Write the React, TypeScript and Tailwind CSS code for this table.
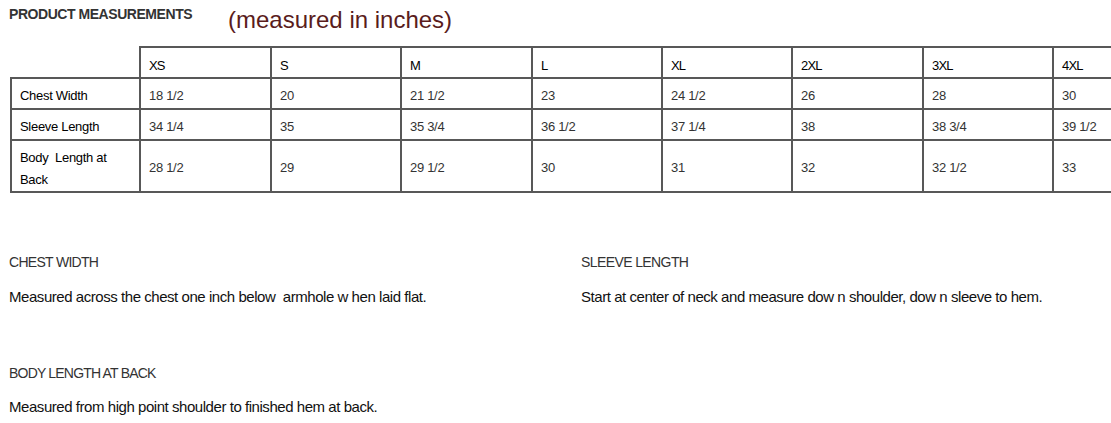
import React from "react";

const sizes = ["XS", "S", "M", "L", "XL", "2XL", "3XL", "4XL"];
const rows: { label: React.ReactNode; values: string[]; tall?: boolean }[] = [
  { label: "Chest Width", values: ["18 1/2", "20", "21 1/2", "23", "24 1/2", "26", "28", "30"] },
  { label: "Sleeve Length", values: ["34 1/4", "35", "35 3/4", "36 1/2", "37 1/4", "38", "38 3/4", "39 1/2"] },
  {
    label: (
      <>
        Body&nbsp; Length at
        <br />
        Back
      </>
    ),
    values: ["28 1/2", "29", "29 1/2", "30", "31", "32", "32 1/2", "33"],
    tall: true,
  },
];
const widths = [129, 131, 130, 131, 130, 130, 131, 130, 130];

export default function App() {
  return (
    <div
      className="w-[1111px] h-[423px] overflow-hidden bg-white text-[#222]"
      style={{ fontFamily: '"Liberation Sans", Arial, sans-serif' }}
    >
      <div className="flex items-start h-[46px]">
        <div className="ml-[9px] mt-[6px] w-[219px] text-[14px] font-bold text-[#333] tracking-[-0.45px] leading-[16px]">
          PRODUCT MEASUREMENTS
        </div>
        <div className="mt-[5px] text-[24px] leading-[30px] text-[#5a1c1c]">(measured in inches)</div>
      </div>

      <table className="ml-[10px] border-collapse table-fixed text-[13px] leading-[22px] tracking-[-0.3px]" style={{ width: 1172 }}>
        <colgroup>
          {widths.map((w, i) => (
            <col key={i} style={{ width: w }} />
          ))}
        </colgroup>
        <tbody>
          <tr className="h-[31px]">
            <td className="border-0 p-0"></td>
            {sizes.map((s) => (
              <td key={s} className="border-2 border-[#585858] pl-[8px] pt-[6px] align-middle tracking-[-0.8px] text-black">
                {s}
              </td>
            ))}
          </tr>
          {rows.map((r, ri) => (
            <tr key={ri} className={r.tall ? "h-[52px]" : "h-[31px]"}>
              <td className={`border-2 border-[#585858] pl-[8px] align-middle text-black ${r.tall ? "pt-[6px]" : "pt-[4px]"}`}>{r.label}</td>
              {r.values.map((v, i) => (
                <td key={i} className="border-2 border-[#585858] pl-[8px] pt-[4px] align-middle text-[#333]">
                  {v}
                </td>
              ))}
            </tr>
          ))}
        </tbody>
      </table>

      <div className="grid grid-cols-[581px_1fr] mt-[60px] leading-[18px]">
        <div className="pl-[9px]">
          <div className="text-[14px] tracking-[-0.7px] text-[#333]">CHEST WIDTH</div>
          <div className="mt-[17px] text-[15px] tracking-[-0.45px] text-[#111]">Measured across the chest one inch below&nbsp; armhole w hen laid flat.</div>
        </div>
        <div>
          <div className="text-[14px] tracking-[-0.6px] text-[#333]">SLEEVE LENGTH</div>
          <div className="mt-[17px] text-[15px] tracking-[-0.45px] text-[#111]">Start at center of neck and measure dow n shoulder, dow n sleeve to hem.</div>
        </div>
        <div className="pl-[9px] mt-[58px]">
          <div className="text-[14px] tracking-[-0.8px] text-[#333]">BODY LENGTH AT BACK</div>
          <div className="mt-[16px] text-[15px] tracking-[-0.45px] text-[#111]">Measured from high point shoulder to finished hem at back.</div>
        </div>
      </div>
    </div>
  );
}
